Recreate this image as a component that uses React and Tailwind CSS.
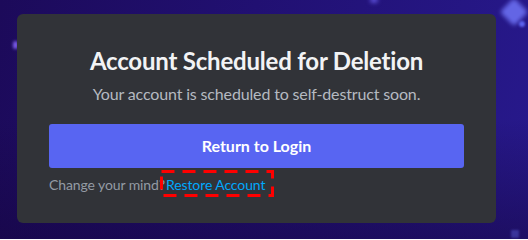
export default function App() {
  return (
    <div className="relative w-[528px] h-[239px] overflow-hidden bg-[linear-gradient(100deg,#1c0a5a_0%,#211072_45%,#27198c_100%)] flex items-start justify-start pl-[17px] pt-[14px] font-['Lato',sans-serif]">
      <div className="absolute left-[370px] top-[-3px] w-[8px] h-[6px] rounded-full bg-[#5b4fd6] blur-[2px]" />
      <div className="absolute left-[504px] top-[2px] w-[20px] h-[20px] rotate-45 rounded-[3px] bg-[#6a6ef0] blur-[2px] opacity-90" />
      <div className="absolute left-[519px] top-[21px] w-[6px] h-[6px] rounded-full bg-[#5d63ef] blur-[1px]" />
      <div className="absolute left-[13px] top-[41px] w-[5px] h-[8px] rounded-full bg-[#7b5ce8] blur-[1.5px]" />
      <div className="absolute left-[511px] top-[230px] w-[8px] h-[8px] rounded-[1px] bg-[#5d60f0] blur-[1px]" />
      <div className="absolute bottom-0 left-0 w-full h-[120px] bg-[linear-gradient(to_top,rgba(20,4,60,0.5),transparent)]" />
      <div className="relative w-[479px] h-[209px] rounded-[6px] bg-[#313338] px-8 pt-8 flex flex-col">
        <h1 className="text-center text-[24px] leading-[30px] font-bold text-[#f2f3f5] tracking-[-0.2px]">
          Account Scheduled for Deletion
        </h1>
        <p className="mt-[8px] text-center text-[16px] leading-[20px] text-[#b5bac1] tracking-[-0.15px]">
          Your account is scheduled to self-destruct soon.
        </p>
        <button className="mt-[20px] h-[44px] w-full rounded-[3px] bg-[#5865f2] text-white text-[16px] font-bold">
          Return to Login
        </button>
        <div className="mt-[8px] flex text-[14px] leading-[18px] text-[#949ba4] tracking-[-0.1px]">
          <span>Change your mind?</span>
          <span className="relative ml-[1px] text-[#00a8fc]">
            Restore Account
            <svg className="absolute left-[-6px] top-[-6px] overflow-visible" width="114" height="27">
              <rect x="1.5" y="1.5" width="111" height="24" fill="none" stroke="#ff0000" strokeWidth="3" strokeDasharray="13 8" />
            </svg>
          </span>
        </div>
      </div>
    </div>
  );
}
